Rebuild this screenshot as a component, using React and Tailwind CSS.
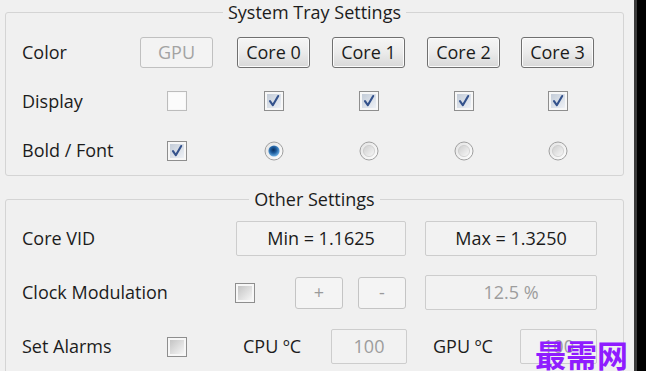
import React from "react";

function CheckBox({ checked = false, variant = "gray" }) {
  const outer = variant === "light" ? "#bcbcbc" : "#8e8e8e";
  return (
    <svg width="20" height="20" viewBox="0 0 20 20">
      <defs>
        <linearGradient id="cbGray" x1="0" y1="0" x2="1" y2="1">
          <stop offset="0" stopColor="#c4c4c4" />
          <stop offset="1" stopColor="#f6f6f6" />
        </linearGradient>
        <linearGradient id="cbBlue" x1="0" y1="0" x2="1" y2="1">
          <stop offset="0" stopColor="#c3ccd8" />
          <stop offset="1" stopColor="#eef1f6" />
        </linearGradient>
      </defs>
      <rect x="0.5" y="0.5" width="19" height="19" fill="#f7f7f7" stroke={outer} />
      {variant === "light" ? (
        <rect x="2" y="2" width="16" height="16" fill="#fbfbfb" />
      ) : (
        <rect x="3" y="3" width="14" height="14" fill={checked ? "url(#cbBlue)" : "url(#cbGray)"} />
      )}
      {checked && (
        <path d="M6 10.2 L8.8 14.2 L14.2 5" fill="none" stroke="#34528c" strokeWidth="2.1" strokeLinecap="round" strokeLinejoin="round" />
      )}
    </svg>
  );
}

function Radio({ selected = false }) {
  return (
    <svg width="20" height="20" viewBox="0 0 20 20">
      <defs>
        <linearGradient id="rbOuter" x1="0" y1="0" x2="1" y2="1">
          <stop offset="0" stopColor="#e2e2e2" />
          <stop offset="1" stopColor="#ffffff" />
        </linearGradient>
        <linearGradient id="rbInner" x1="0" y1="0" x2="1" y2="1">
          <stop offset="0" stopColor="#cdcdcd" />
          <stop offset="1" stopColor="#f9f9f9" />
        </linearGradient>
        <radialGradient id="rbSel" cx="0.45" cy="0.4" r="0.6">
          <stop offset="0" stopColor="#0a2f5e" />
          <stop offset="0.45" stopColor="#1c5b9c" />
          <stop offset="1" stopColor="#6fb2e6" />
        </radialGradient>
      </defs>
      <circle cx="10" cy="10" r="9" fill="url(#rbOuter)" stroke="#a0a0a0" strokeWidth="1" />
      {selected ? (
        <circle cx="10" cy="10" r="5.6" fill="url(#rbSel)" />
      ) : (
        <circle cx="10" cy="10" r="5.6" fill="url(#rbInner)" stroke="#c2c2c2" strokeWidth="0.6" />
      )}
    </svg>
  );
}

function CoreButton({ children, disabled = false }) {
  return disabled ? (
    <div className="w-[73px] h-[31px] rounded-[3px] border border-[#c0c0c0] bg-[#f3f3f3] text-[#a3a3a3] flex items-center justify-center">
      {children}
    </div>
  ) : (
    <div className="w-[73px] h-[31px] rounded-[3px] border border-[#707070] bg-linear-to-b from-[#f5f5f5] via-[#ebebeb] to-[#d8d8d8] shadow-[inset_0_0_0_1px_#fbfbfb] text-[#1b1b1b] flex items-center justify-center">
      {children}
    </div>
  );
}

function Cell({ children }) {
  return <div className="w-[73px] flex items-center justify-center">{children}</div>;
}

function Field({ children, w, muted = false }) {
  return (
    <div
      className={`${w} h-[35px] rounded-[2px] border border-[#cdcdcd] bg-[#f2f2f2] flex items-center justify-center ${
        muted ? "text-[#9d9d9d]" : "text-[#1b1b1b]"
      }`}
    >
      {children}
    </div>
  );
}

function SmallButton({ children }) {
  return (
    <div className="w-[48px] h-[32px] rounded-[3px] border border-[#c4c4c4] bg-[#f4f4f4] text-[#9a9a9a] flex items-center justify-center">
      {children}
    </div>
  );
}

export default function App() {
  return (
    <div className="w-[646px] h-[389px] bg-white relative overflow-hidden font-['Open_Sans',sans-serif] text-[18px] text-[#1c1c1c]">
      <div className="flex h-[371px] overflow-hidden">
        <div className="w-[634px] bg-[#f0f0f0] pl-[5px] flex flex-col">
          <fieldset className="w-[619px] border border-[#d4d4d4] rounded-[3px] px-[16px] pt-[13px] pb-[8px]">
            <legend className="mx-auto px-[5px] leading-[24px]">System Tray Settings</legend>
            <div className="grid grid-cols-[96px_75px_73px_73px_72px_74px] grid-rows-[31px_32px_33px] gap-x-[22px] gap-y-[17px] items-center">
              <div>Color</div>
              <CoreButton disabled>GPU</CoreButton>
              <CoreButton>Core 0</CoreButton>
              <CoreButton>Core 1</CoreButton>
              <CoreButton>Core 2</CoreButton>
              <CoreButton>Core 3</CoreButton>

              <div>Display</div>
              <Cell><CheckBox variant="light" /></Cell>
              <Cell><CheckBox checked /></Cell>
              <Cell><CheckBox checked /></Cell>
              <Cell><CheckBox checked /></Cell>
              <Cell><CheckBox checked /></Cell>

              <div>Bold / Font</div>
              <Cell><CheckBox checked /></Cell>
              <Cell><Radio selected /></Cell>
              <Cell><Radio /></Cell>
              <Cell><Radio /></Cell>
              <Cell><Radio /></Cell>
            </div>
          </fieldset>

          <fieldset className="mt-[11px] w-[619px] border border-[#d4d4d4] rounded-[3px] px-[16px] pt-[10px] pb-[12px]">
            <legend className="mx-auto px-[5px] leading-[24px]">Other Settings</legend>
            <div className="flex flex-col gap-y-[19px]">
              <div className="flex items-center h-[35px]">
                <div className="w-[214px]">Core VID</div>
                <Field w="w-[170px]">Min = 1.1625</Field>
                <div className="w-[19px]" />
                <Field w="w-[172px]">Max = 1.3250</Field>
              </div>

              <div className="flex items-center h-[35px]">
                <div className="w-[213px]">Clock Modulation</div>
                <div className="w-[60px] flex items-center">
                  <CheckBox />
                </div>
                <SmallButton>+</SmallButton>
                <div className="w-[15px]" />
                <SmallButton>-</SmallButton>
                <div className="w-[19px]" />
                <Field w="w-[172px]" muted>12.5 %</Field>
              </div>

              <div className="flex items-center h-[35px]">
                <div className="w-[145px]">Set Alarms</div>
                <div className="w-[76px] flex items-center">
                  <CheckBox />
                </div>
                <div className="w-[88px]">CPU ºC</div>
                <Field w="w-[76px]" muted>100</Field>
                <div className="w-[26px]" />
                <div className="w-[87px]">GPU ºC</div>
                <Field w="w-[77px]" muted>100</Field>
              </div>
            </div>
          </fieldset>
        </div>
        <div className="w-[12px] border-l-[3px] border-[#3b3b3b] bg-black" />
      </div>
      <div className="absolute left-[535px] top-[336px] text-[31px] leading-[36px] font-bold text-[#8f1cff] font-['Noto_Sans_CJK_SC',sans-serif]">
        最需网
      </div>
    </div>
  );
}
